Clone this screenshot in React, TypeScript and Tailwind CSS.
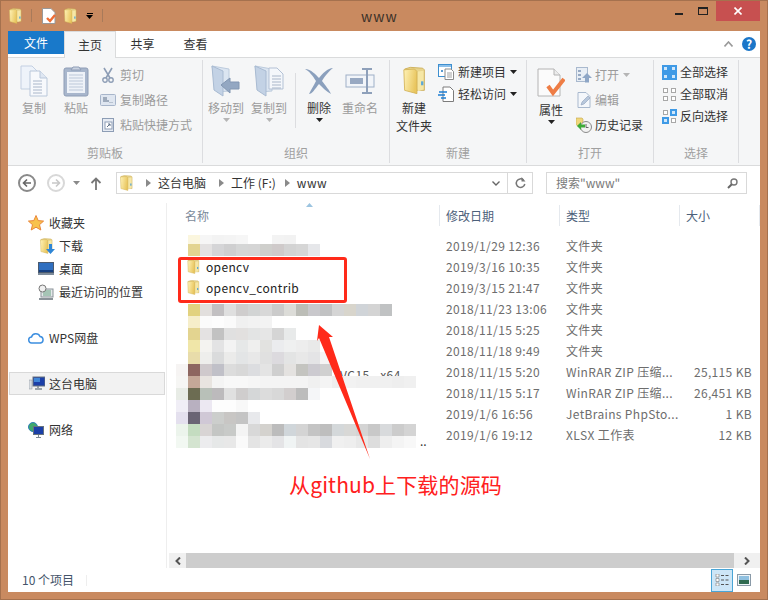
import { useId, type ReactNode } from "react";

const Folder = ({ w = 14, h = 17 }: { w?: number; h?: number }) => {
  const id = useId();
  return (
    <svg width={w} height={h} viewBox="0 0 14 17" className="shrink-0">
      <defs>
        <linearGradient id={id} x1="0" y1="0" x2="1" y2="0.3">
          <stop offset="0" stopColor="#fff3b8" />
          <stop offset="1" stopColor="#e9c65f" />
        </linearGradient>
      </defs>
      <path d="M1 1.5 L4.5 .5 L12 1 L13 2 L13 14.5 L5 14.5 Z" fill="#e8d48c" stroke="#c9a94f" strokeWidth=".5" />
      <path d="M.5 2 L7 1.5 L8.5 3 L8.5 16.5 L1 14.5 Z" fill={`url(#${id})`} stroke="#d2b052" strokeWidth=".5" />
      <path d="M9 3 L12.5 2.5 L12.5 14 L9 15 Z" fill="#f6e7a6" />
      <rect x="11" y="9" width="1.4" height="2.4" fill="#5ba7d8" />
    </svg>
  );
};

const Tri = ({ color = "#333" }: { color?: string }) => (
  <svg width="7" height="4" viewBox="0 0 7 4" className="shrink-0">
    <path d="M0 0H7L3.5 4Z" fill={color} />
  </svg>
);

const PageLines = ({ x, y }: { x: number; y: number }) => (
  <g stroke="#a9b6c9" strokeWidth="1">
    <path d={`M${x} ${y}h9M${x} ${y + 3}h9M${x} ${y + 6}h9M${x} ${y + 9}h9M${x} ${y + 12}h9`} />
  </g>
);

const CopyIcon = () => (
  <svg width="28" height="32" viewBox="0 0 28 32">
    <path d="M1 1H12L17 6V24H1Z" fill="#eef3fa" stroke="#c3d0e2" />
    <path d="M10 6H20L27 13V31H10Z" fill="#f7f9fc" stroke="#b9c7da" />
    <path d="M20 6V13H27" fill="#dfe7f2" stroke="#b9c7da" />
    <PageLines x={13} y={16} />
  </svg>
);

const PasteIcon = () => (
  <svg width="26" height="32" viewBox="0 0 26 32">
    <rect x="1" y="3" width="24" height="28" rx="2" fill="#a8b6cc" stroke="#8e9db6" />
    <rect x="4" y="7" width="18" height="21" fill="#eef2f8" />
    <path d="M6 10h14M6 13h14M6 16h14M6 19h14M6 22h14M6 25h14" stroke="#bcc8d9" />
    <path d="M8 5 L10 2H16L18 5Z" fill="#c9d2e0" stroke="#8e9db6" />
  </svg>
);

const MoveIcon = ({ copy }: { copy?: boolean }) => (
  <svg width="30" height="32" viewBox="0 0 30 32">
    <path d="M1 1L18 4V26L6 27Z" fill="#dbe5f1" stroke="#bccbdd" />
    <path d="M1 1L12 6V31L3 25Z" fill="#c3d2e5" stroke="#a9bbd2" />
    {copy ? (
      <>
        <path d="M15 3H23L29 9V24H15Z" fill="#f4f7fb" stroke="#b3c1d5" />
        <PageLines x={18} y={11} />
      </>
    ) : (
      <path d="M10 20L19 13V17H28V24H19V28Z" fill="#93a7c2" stroke="#8296b2" />
    )}
  </svg>
);

const DeleteIcon = () => (
  <svg width="30" height="28" viewBox="0 0 30 28">
    <path d="M1 2C7 2 12 8 15 11C18 7 24 1 29 1C25 4 20 10 18 14C21 18 26 24 27 27C23 25 18 20 15 17C11 22 8 27 5 27C7 23 10 18 12 14C9 9 5 4 1 2Z" fill="#8ba0bd" />
  </svg>
);

const RenameIcon = () => (
  <svg width="30" height="28" viewBox="0 0 30 28">
    <rect x="1" y="8" width="28" height="12" fill="#f2f5f9" stroke="#9fb0c8" />
    <rect x="5" y="11" width="13" height="6" fill="#98a9c2" />
    <path d="M17 2H27M17 26H27M22 2V26" stroke="#8ea0ba" strokeWidth="2" />
  </svg>
);

const NewFolderIcon = () => <Folder w={23} h={33} />;

const PropsIcon = () => (
  <svg width="28" height="30" viewBox="0 0 28 30">
    <path d="M1 1H17L23 7V28H1Z" fill="#fbfbfb" stroke="#b4b4b4" />
    <path d="M17 1V7H23" fill="#ececec" stroke="#b4b4b4" />
    <path d="M11 18L16 25L27 11" fill="none" stroke="#ee7d45" strokeWidth="4" />
  </svg>
);

const ScissorsIcon = () => (
  <svg width="12" height="16" viewBox="0 0 12 16">
    <path d="M2 1L8 11M10 1L4 11" stroke="#8d9db5" strokeWidth="1.6" />
    <circle cx="3" cy="13" r="2.2" fill="none" stroke="#8d9db5" strokeWidth="1.4" />
    <circle cx="9" cy="13" r="2.2" fill="none" stroke="#8d9db5" strokeWidth="1.4" />
  </svg>
);

const CopyPathIcon = () => (
  <svg width="16" height="12" viewBox="0 0 16 12">
    <rect x=".5" y=".5" width="15" height="11" rx="1" fill="#dfe6f0" stroke="#a7b5ca" />
    <path d="M4 3V8M6 3V8M8 6V8M10 8V8.6M12 8V8.6" stroke="#5f7088" />
  </svg>
);

const ShortcutIcon = () => (
  <svg width="12" height="15" viewBox="0 0 12 15">
    <rect x=".5" y="1.5" width="11" height="13" fill="#e6ebf3" stroke="#8d9db5" />
    <rect x="3" y="5" width="7" height="7" fill="#fff" stroke="#8d9db5" />
    <path d="M5 10L8 7M6 7H8V9" stroke="#5f7088" fill="none" />
  </svg>
);

const NewItemIcon = () => (
  <svg width="16" height="16" viewBox="0 0 16 16">
    <rect x=".5" y=".5" width="13" height="12" fill="#fff" stroke="#3d8fd0" />
    <rect x="1" y="1" width="12" height="2" fill="#8dc0ea" />
    <path d="M7 5H13L15.5 7.5V15.5H7Z" fill="#fff" stroke="#8a8a8a" />
    <path d="M9 9h5M9 11h5M9 13h5" stroke="#a0a0a0" />
    <path d="M3 6h2v2h-2z" fill="#5a9ad0" />
  </svg>
);

const EasyIcon = () => (
  <svg width="16" height="16" viewBox="0 0 16 16">
    <path d="M5 1H12L15.5 4.5V15.5H5Z" fill="#fff" stroke="#7c7c7c" />
    <path d="M1 6H9M0 9H7M3 12H8" stroke="#1e7fd4" strokeWidth="1.4" />
  </svg>
);

const OpenIcon = () => (
  <svg width="16" height="16" viewBox="0 0 16 16">
    <rect x=".5" y=".5" width="11" height="14" fill="#e8eef5" stroke="#a9b9ce" />
    <path d="M2 3h3v2H2zM2 7h3v2H2zM2 11h3v2H2z" fill="#97aac4" />
    <path d="M11 6L16 11H13V15.5H9V11H6Z" fill="#8ea6c6" />
  </svg>
);

const EditIcon = () => (
  <svg width="14" height="16" viewBox="0 0 14 16">
    <path d="M1 .5H9L13 4.5V15.5H1Z" fill="#f4f7fb" stroke="#a9b9ce" />
    <path d="M4 13L5 10L11 4L13 6L7 12Z" fill="#b8c8dc" stroke="#8ea0ba" strokeWidth=".6" />
  </svg>
);

const HistoryIcon = () => (
  <svg width="16" height="16" viewBox="0 0 16 16">
    <path d="M0 1H6L7 2V9H1.5L0 7Z" fill="#f0d77c" stroke="#c4a64c" strokeWidth=".6" />
    <circle cx="10" cy="10" r="5.5" fill="#f2f2f2" stroke="#8a8a8a" />
    <path d="M10 7V10.5H12.5" stroke="#666" fill="none" />
    <path d="M1 9L5 5V7.5H9V10.5H5V13Z" fill="#3eab38" />
  </svg>
);

const SelectIcon = ({ kind }: { kind: "all" | "none" | "invert" }) => {
  const on = "#3f9ae6";
  const cell = (x: number, y: number, filled: boolean) =>
    filled ? (
      <g key={`${x}${y}`}>
        <rect x={x} y={y} width="7" height="7" fill={on} />
        <rect x={x + 2} y={y + 2} width="3" height="3" fill="#cfe7fb" />
      </g>
    ) : (
      <rect key={`${x}${y}`} x={x + 1.5} y={y + 1.5} width="4" height="4" fill="#fff" stroke="#a8a8a8" />
    );
  const states =
    kind === "all" ? [1, 1, 1, 1] : kind === "none" ? [0, 0, 0, 0] : [0, 1, 1, 0];
  return (
    <svg width="15" height="15" viewBox="0 0 15 15">
      {kind === "all" && <rect width="15" height="15" fill={on} />}
      {cell(0, 0, !!states[0])}
      {cell(8, 0, !!states[1])}
      {cell(0, 8, !!states[2])}
      {cell(8, 8, !!states[3])}
    </svg>
  );
};

const BigButton = ({
  w,
  icon,
  label,
  disabled,
  drop,
  className = "",
}: {
  w: string;
  icon: ReactNode;
  label: ReactNode;
  disabled?: boolean;
  drop?: "dark" | "light";
  className?: string;
}) => (
  <div className={`flex flex-col items-center shrink-0 ${w} ${className} ${disabled ? "text-[#9b9b9b]" : "text-[#333]"}`}>
    <div className="h-[37px] flex items-center justify-center">{icon}</div>
    <div className="leading-[18px] text-center">{label}</div>
    {drop && (
      <div className="mt-[1px]">
        <Tri color={drop === "dark" ? "#222" : "#b5b5b5"} />
      </div>
    )}
  </div>
);

const SmallRow = ({
  icon,
  label,
  disabled,
  drop,
  gap = "gap-[4px]",
  h = "h-[25px]",
}: {
  icon: ReactNode;
  label: string;
  disabled?: boolean;
  drop?: ReactNode;
  gap?: string;
  h?: string;
}) => (
  <div className={`flex items-center ${gap} ${h} ${disabled ? "text-[#9b9b9b]" : "text-[#333]"}`}>
    <div className="w-4 flex justify-center shrink-0">{icon}</div>
    <span className="whitespace-nowrap">{label}</span>
    {drop}
  </div>
);

const Group = ({ w, label, children }: { w: string; label: string; children: ReactNode }) => (
  <div className={`${w} shrink-0 flex flex-col border-r border-[#dcdde0] my-[2px] h-[103px]`}>
    <div className="flex flex-1 pt-[2px]">{children}</div>
    <div className="text-center text-[#a0a0a0] leading-[18px] pb-[1px]">{label}</div>
  </div>
);

const Chevron = () => (
  <svg width="5" height="8" viewBox="0 0 5 8" className="shrink-0">
    <path d="M0 0L5 4L0 8Z" fill="#8a8a8a" />
  </svg>
);

const NavRow = ({
  icon,
  label,
  indent,
  selected,
  className = "",
}: {
  icon: ReactNode;
  label: string;
  indent?: boolean;
  selected?: boolean;
  className?: string;
}) => (
  <div
    className={`h-[23px] flex items-center text-[#333] ${
      selected
        ? "mx-[1px] pl-[19px] gap-[4px] border border-[#d9d9d9] bg-[#f2f2f2] w-[156px]"
        : indent
          ? "pl-[30px] gap-[5px]"
          : "pl-[20px] gap-[5px]"
    } ${className}`}
  >
    <div className="w-[16px] flex justify-center shrink-0">{icon}</div>
    <span className="whitespace-nowrap">{label}</span>
  </div>
);

const PcIcon = () => (
  <svg width="16" height="15" viewBox="0 0 16 15">
    <rect x="0" y="4" width="3" height="9" fill="#d8dde2" stroke="#8b949c" strokeWidth=".5" />
    <rect x="4" y="1" width="12" height="9" fill="#1b3fa8" stroke="#66727e" />
    <path d="M5 2h6v4H5z" fill="#3f86d8" />
    <path d="M9 10V12M6 13H13" stroke="#7d8993" strokeWidth="1.5" />
  </svg>
);

const files: { date: string; type: string; size?: string; name?: string }[] = [
  { date: "2019/1/29 12:36", type: "文件夹" },
  { date: "2019/3/16 10:35", type: "文件夹", name: "opencv" },
  { date: "2019/3/15 21:47", type: "文件夹", name: "opencv_contrib" },
  { date: "2018/11/23 13:06", type: "文件夹" },
  { date: "2018/11/15 5:25", type: "文件夹" },
  { date: "2018/11/18 9:49", type: "文件夹" },
  { date: "2018/11/15 5:20", type: "WinRAR ZIP 压缩...", size: "25,115 KB" },
  { date: "2018/11/15 5:17", type: "WinRAR ZIP 压缩...", size: "26,451 KB" },
  { date: "2019/1/6 16:56", type: "JetBrains PhpSto...", size: "1 KB" },
  { date: "2019/1/6 19:12", type: "XLSX 工作表", size: "12 KB" },
];

// blurred-out file names: one strip of 12px blocks per row
const mosaic: { top: string; left?: string; cells: string[] }[] = [
  { top: "top-[9px] h-[9px]", cells: ["#fbf6de", "#f6f6f6", "#f3f3f3", "#f4f4f4", "#f6f6f6", "#fff", "#fff", "#f3f3f3", "#f2f2f2"] },
  { top: "top-[18px]", cells: ["#e3d490", "#e4e2e2", "#d5d5d7", "#cfcfd0", "#d5d6d6", "#d5d5d5", "#cfcfcc", "#cfcaca", "#d3d3d3", "#d6d6d6", "#e6e7ea"] },
  { top: "top-[78px]", cells: ["#e2d27f", "#e2dfdd", "#c2c0c2", "#dfdfdf", "#cfcdcd", "#d2d4d4", "#d8d8d8", "#cbcbcb", "#dcdcd8", "#bcbdb7", "#c9c8cc", "#c1c2c3", "#d5d5d5", "#d8d5cc", "#d0d4d8", "#d4d4d4", "#c0c2c3"] },
  { top: "top-[90px]", cells: ["#f6eeca", "#fbfbfb", "#fdfdfd", "#fafafa", "#f0f0f0", "#f2f2f2", "#f3f3f3"] },
  { top: "top-[102px]", cells: ["#e3d490", "#e4e2e2", "#c2c2c2", "#e0e0e0", "#e2e0df", "#e3e4e4", "#e6e6e6", "#d5d5d5", "#e8eaea"] },
  { top: "top-[114px]", cells: ["#f0e6a8", "#f4f3f0", "#e3e3e4", "#f3f3f3", "#e6e8e8", "#efefee", "#e2e2e0", "#ebecee", "#eff0f0", "#ededed", "#e9e9e9"] },
  { top: "top-[126px]", cells: ["#e8dcaa", "#eeeeec", "#dadbdc", "#ebebea", "#e3e5e6", "#e8e8e8", "#e0e0e0", "#dcdade", "#e3e4e4", "#e8e8e8", "#e4e4e6", "#f5f5f5"] },
  { top: "top-[138px]", left: "#f6f4f3", cells: ["#8d6660", "#cfc9cc", "#c0c0c8", "#dcdcdc", "#d8d8d8", "#dcdde0", "#e4e4e4", "#cfcfcf", "#e4e2e0", "#c4c4c0", "#cccad0", "#d0d0d0"] },
  { top: "top-[150px]", left: "#f6f6f4", cells: ["#c4a898", "#e8e4e0", "#f4f4f4", "#f8f8f8", "#f8f8f8", "#f6f6f6", "#f4f4f4", "#f4f4f4", "#f4f4f4", "#f4f4f4", "#f0f0f0", "#f4f4f4", "#eeeeee", "#f2f2f2", "#f0f0f0", "#f0f0f0", "#f0f0f0", "#eeeeee", "#f0f0f0"] },
  { top: "top-[162px]", left: "#e8ece6", cells: ["#6c6c52", "#b8c0b8", "#bcbabc", "#e0e0e0", "#cfcdcd", "#d5d7d8", "#dcdcdc", "#d8d8d8", "#d2cece", "#bcbcbc", "#f5f6f8"] },
  { top: "top-[174px]", left: "#f0eef6", cells: ["#b8b0c0", "#ece8f2", "#fdfdfd", "#fdfdfd", "#f8f8f8"] },
  { top: "top-[186px]", left: "#e4e0ee", cells: ["#6a6474", "#d0c8d6", "#cccecc", "#c8c6c4", "#c4c4c4", "#e8e9ec"] },
  { top: "top-[198px]", left: "#ecf4ec", cells: ["#c4dcc0", "#d8d4d4", "#c4c6c4", "#c8cac8", "#f4f4f4", "#d8d8d8", "#d4d2ce", "#bcbcbc", "#d0d6da", "#d4d4d4", "#c4c4c4", "#bebebe", "#d4d8da", "#d8d8d6", "#d4d4d4", "#c8c8c8", "#d8dadc", "#cccccc", "#d4d4d4"] },
  { top: "top-[210px]", left: "#f2f8f2", cells: ["#d4e4d0", "#ececee", "#e6e8e8", "#e8e8e8", "#fafafa", "#e4e4e4", "#ebebeb", "#e4e4e6", "#f0f4f4", "#e4e4e4", "#e6e6e6", "#d8dade", "#f0f0f0", "#eeeeee", "#e8e8e8", "#dddddd", "#eeeeee", "#f4f4f4", "#f8f8f8"] },
];

export default function App() {
  return (
    <div className="w-[768px] h-[600px] bg-[#c98a60] border border-[#a5714e] relative overflow-hidden flex flex-col px-[7px] pb-[7px] text-[12px] font-['Noto_Sans_CJK_SC','Liberation_Sans',sans-serif]">
      {/* title bar */}
      <div className="h-[30px] shrink-0 flex items-start relative">
        <div className="flex items-center h-[29px] pl-[1px]">
          <Folder w={13} h={16} />
          <div className="w-[1px] h-[13px] bg-[#a87a5a] ml-[9px]" />
          <svg width="14" height="16" viewBox="0 0 14 16" className="ml-[10px]">
            <path d="M.5 .5H9L13 4.5V15.5H.5Z" fill="#fff" stroke="#999" />
            <path d="M5 10L8 13L13 7" fill="none" stroke="#ee6d35" strokeWidth="2.4" />
          </svg>
          <div className="ml-[8px]">
            <Folder w={13} h={16} />
          </div>
          <div className="ml-[9px] flex flex-col items-center gap-[1px]">
            <div className="w-[6px] h-[1px] bg-black" />
            <Tri color="#000" />
          </div>
          <div className="w-[1px] h-[13px] bg-[#a87a5a] ml-[9px]" />
        </div>
        <div className="absolute left-[353px] top-[5px] text-[14px] leading-[20px] tracking-[1px] text-[#3a3028]">www</div>
        <div className="ml-auto flex items-start">
          <div className="w-[8px] h-[2px] bg-[#222] mt-[12px] mr-[15px]" />
          <div className="w-[10px] h-[8px] border border-[#222] border-t-2 mt-[6px] mr-[8px]" />
          <div className="w-[44px] h-[20px] bg-[#c75050] flex items-center justify-center">
            <svg width="8" height="8" viewBox="0 0 8 8">
              <path d="M.5 .5L7.5 7.5M7.5 .5L.5 7.5" stroke="#fff" strokeWidth="1.6" />
            </svg>
          </div>
        </div>
      </div>

      <div className="flex-1 bg-white flex flex-col min-h-0">
        {/* tabs */}
        <div className="h-[27px] shrink-0 flex items-start relative border-b border-[#dadbdc]">
          <div className="w-[56px] h-[23px] bg-[#1979ca] text-white flex items-center justify-center">文件</div>
          <div className="w-[52px] h-[27px] bg-[#f5f6f7] border border-b-0 border-[#dadbdc] flex items-center justify-center text-[#333] relative z-10">主页</div>
          <div className="w-[53px] h-[25px] flex items-center justify-center text-[#333]">共享</div>
          <div className="w-[53px] h-[25px] flex items-center justify-center text-[#333]">查看</div>
          <div className="ml-auto flex items-center h-[25px] pr-[4px] gap-[9px]">
            <svg width="9" height="6" viewBox="0 0 9 6">
              <path d="M.5 5.5L4.5 1L8.5 5.5" fill="none" stroke="#9a9a9a" strokeWidth="1.6" />
            </svg>
            <div className="w-[14px] h-[14px] rounded-full bg-[#1b76c8] text-white text-[12px] font-bold flex items-center justify-center leading-none">?</div>
          </div>
        </div>

        {/* ribbon */}
        <div className="h-[108px] shrink-0 bg-[#f5f6f7] border-b border-[#dadbdc] flex">
          <Group w="w-[195px]" label="剪贴板">
            <BigButton w="w-[40px]" className="ml-[6px]" disabled icon={<CopyIcon />} label="复制" />
            <BigButton w="w-[40px]" className="ml-[2px]" disabled icon={<PasteIcon />} label="粘贴" />
            <div className="ml-[4px] -mt-[1px] pt-[1px]">
              <SmallRow disabled icon={<ScissorsIcon />} label="剪切" />
              <SmallRow disabled icon={<CopyPathIcon />} label="复制路径" />
              <SmallRow disabled icon={<ShortcutIcon />} label="粘贴快捷方式" />
            </div>
          </Group>
          <Group w="w-[187px]" label="组织">
            <BigButton w="w-[42px]" className="ml-[2px]" disabled drop="light" icon={<MoveIcon />} label="移动到" />
            <BigButton w="w-[42px]" className="ml-[1px]" disabled drop="light" icon={<MoveIcon copy />} label="复制到" />
            <div className="w-[1px] h-[55px] bg-[#dcdde0] ml-[5px] mt-[11px] shrink-0" />
            <BigButton w="w-[36px]" className="ml-[5px]" drop="dark" icon={<DeleteIcon />} label="删除" />
            <BigButton w="w-[40px]" className="ml-[3px]" disabled icon={<RenameIcon />} label="重命名" />
          </Group>
          <Group w="w-[137px]" label="新建">
            <BigButton w="w-[48px]" icon={<NewFolderIcon />} label={<>新建<br />文件夹</>} />
            <div className="-mt-[1px]">
              <SmallRow h="h-[22px]" icon={<NewItemIcon />} label="新建项目" drop={<span className="flex"><Tri color="#222" /></span>} />
              <SmallRow h="h-[22px]" icon={<EasyIcon />} label="轻松访问" drop={<span className="flex"><Tri color="#222" /></span>} />
            </div>
          </Group>
          <Group w="w-[127px]" label="打开">
            <BigButton w="w-[48px]" className="pt-[2px]" drop="dark" icon={<PropsIcon />} label="属性" />
            <div className="ml-[1px] -mt-[1px] pt-[1px]">
              <SmallRow gap="gap-[3px]" disabled icon={<OpenIcon />} label="打开" drop={<span className="ml-[1px] flex"><Tri color="#b5b5b5" /></span>} />
              <SmallRow gap="gap-[3px]" disabled icon={<EditIcon />} label="编辑" />
              <SmallRow gap="gap-[3px]" icon={<HistoryIcon />} label="历史记录" />
            </div>
          </Group>
          <Group w="w-[85px]" label="选择">
            <div className="ml-[7px] -mt-[1px]">
              <SmallRow gap="gap-[3px]" h="h-[22px]" icon={<SelectIcon kind="all" />} label="全部选择" />
              <SmallRow gap="gap-[3px]" h="h-[22px]" icon={<SelectIcon kind="none" />} label="全部取消" />
              <SmallRow gap="gap-[3px]" h="h-[22px]" icon={<SelectIcon kind="invert" />} label="反向选择" />
            </div>
          </Group>
        </div>

        {/* address bar */}
        <div className="h-[37px] shrink-0 flex items-start pt-[6px]">
          <div className="w-[108px] h-[22px] flex items-center shrink-0 pl-[10px]">
            <div className="w-[18px] h-[18px] rounded-full border-2 border-[#8a8a8a] flex items-center justify-center bg-white">
              <svg width="10" height="10" viewBox="0 0 10 10">
                <path d="M9 5H2M5 1.5L1.5 5L5 8.5" fill="none" stroke="#666" strokeWidth="1.6" />
              </svg>
            </div>
            <div className="w-[18px] h-[18px] rounded-full border-2 border-[#d8d8d8] flex items-center justify-center ml-[11px]">
              <svg width="10" height="10" viewBox="0 0 10 10">
                <path d="M1 5H8M5 1.5L8.5 5L5 8.5" fill="none" stroke="#c8c8c8" strokeWidth="1.6" />
              </svg>
            </div>
            <div className="ml-[8px]"><Tri color="#8a8a8a" /></div>
            <svg width="12" height="13" viewBox="0 0 12 13" className="ml-[10px]">
              <path d="M6 13V2M1.5 6L6 1.5L10.5 6" fill="none" stroke="#777" strokeWidth="1.8" />
            </svg>
          </div>
          <div className="w-[417px] h-[22px] border border-[#d9d9d9] flex items-center shrink-0 text-[#333]">
            <div className="ml-[3px]"><Folder w={13} h={16} /></div>
            <div className="ml-[13px]"><Chevron /></div>
            <span className="ml-[7px] whitespace-nowrap">这台电脑</span>
            <div className="ml-[13px]"><Chevron /></div>
            <span className="ml-[7px] whitespace-nowrap">工作 (F:)</span>
            <div className="ml-[9px]"><Chevron /></div>
            <span className="ml-[7px] tracking-[0.5px]">www</span>
            <div className="ml-auto flex items-center h-full">
              <svg width="8" height="5" viewBox="0 0 8 5" className="mr-[7px]">
                <path d="M.5 .5L4 4L7.5 .5" fill="none" stroke="#666" strokeWidth="1.4" />
              </svg>
              <div className="w-[25px] h-full border-l border-[#d9d9d9] flex items-center justify-center">
                <svg width="11" height="12" viewBox="0 0 11 12">
                  <path d="M8.5 3A4.3 4.3 0 1 0 9.8 7" fill="none" stroke="#777" strokeWidth="1.5" />
                  <path d="M6.5 0V4.5H10.5Z" fill="#777" />
                </svg>
              </div>
            </div>
          </div>
          <div className="w-[201px] h-[22px] border border-[#d9d9d9] ml-[13px] flex items-center justify-between pl-[9px] pr-[8px] text-[#7a7a7a] shrink-0">
            <span>搜索"www"</span>
            <svg width="11" height="11" viewBox="0 0 11 11">
              <circle cx="7" cy="4" r="3" fill="none" stroke="#777" strokeWidth="1.4" />
              <path d="M4.8 6.2L1 10" stroke="#666" strokeWidth="2" />
            </svg>
          </div>
        </div>

        {/* main */}
        <div className="flex-1 flex min-h-0">
          <div className="w-[159px] shrink-0 border-r border-[#eeeeee] pt-[8px]">
            <NavRow
              label="收藏夹"
              icon={
                <svg width="16" height="16" viewBox="0 0 16 16">
                  <path d="M8 .5L10.2 5.6L15.6 6.1L11.5 9.7L12.8 15L8 12.2L3.2 15L4.5 9.7L.4 6.1L5.8 5.6Z" fill="#f8c24c" stroke="#e9863a" />
                </svg>
              }
            />
            <NavRow
              indent
              label="下载"
              icon={
                <span className="relative flex">
                  <Folder w={13} h={16} />
                  <svg width="9" height="10" viewBox="0 0 9 10" className="absolute left-[6px] top-[6px]">
                    <path d="M3 0H6V5H9L4.5 10L0 5H3Z" fill="#2f86d6" />
                  </svg>
                </span>
              }
            />
            <NavRow
              indent
              label="桌面"
              icon={
                <svg width="16" height="13" viewBox="0 0 16 13">
                  <rect x=".5" y=".5" width="15" height="10" fill="#2f6fc0" stroke="#4a5a70" />
                  <rect x="1" y="8" width="14" height="2" fill="#153f80" />
                  <rect x="0" y="11" width="16" height="2" fill="#7d8b9a" />
                </svg>
              }
            />
            <NavRow
              indent
              label="最近访问的位置"
              icon={
                <svg width="16" height="16" viewBox="0 0 16 16">
                  <rect x="3" y="5" width="12" height="8" fill="#e4e8ea" stroke="#8a9298" />
                  <path d="M5 7h8M5 9h8M5 11h8" stroke="#66a080" />
                  <circle cx="4.5" cy="4.5" r="3.5" fill="#f0f0f0" stroke="#777" />
                  <path d="M1 15h14" stroke="#8a9298" strokeWidth="2" />
                </svg>
              }
            />
            <NavRow
              className="mt-[23px]"
              label="WPS网盘"
              icon={
                <svg width="16" height="12" viewBox="0 0 16 12">
                  <path d="M4 11A3 3 0 0 1 3.5 5A4.5 4.5 0 0 1 12 4.5A3.3 3.3 0 0 1 12.5 11Z" fill="#fff" stroke="#3d8fe0" strokeWidth="1.5" />
                </svg>
              }
            />
            <NavRow className="mt-[23px]" selected label="这台电脑" icon={<PcIcon />} />
            <NavRow
              className="mt-[23px]"
              label="网络"
              icon={
                <span className="relative flex w-[16px] h-[16px]">
                  <span className="absolute left-0 top-0 w-[10px] h-[10px] rounded-full bg-[#3fa86c] border border-[#2e7fb8]" />
                  <svg width="11" height="12" viewBox="0 0 11 12" className="absolute right-0 bottom-0">
                    <rect x=".5" y=".5" width="10" height="8" fill="#1b3fa8" stroke="#66727e" />
                    <path d="M5.5 9V11M3 11.5H8" stroke="#7d8993" />
                  </svg>
                </span>
              }
            />
          </div>

          <div className="flex-1 min-w-0 flex flex-col relative pl-[1px]">
            {/* column header */}
            <div className="h-[21px] mt-[2px] shrink-0 flex text-[#4c607a] relative">
              <div className="w-[272px] pl-[17px] border-r border-[#e5e9ee] flex items-center text-[#7b8a9a]">名称</div>
              <div className="w-[120px] pl-[6px] border-r border-[#e5e9ee] flex items-center">修改日期</div>
              <div className="w-[120px] pl-[6px] border-r border-[#e5e9ee] flex items-center">类型</div>
              <div className="w-[80px] pl-[6px] border-r border-[#e5e9ee] flex items-center">大小</div>
              <svg width="7" height="4" viewBox="0 0 7 4" className="absolute left-[138px] -top-[2px]">
                <path d="M0 4L3.5 0L7 4Z" fill="#9cc4e0" />
              </svg>
            </div>

            {/* file rows */}
            <div className="flex-1 pt-[9px] relative min-h-0">
              {files.map((f) => (
                <div key={f.date} className="h-[21px] flex items-center text-[#6d6d6d] tracking-[0.35px]">
                  <div className="w-[272px] pl-[19px] flex items-center gap-[6px] text-[#222]">
                    {f.name && (
                      <>
                        <Folder w={13} h={15} />
                        <span>{f.name}</span>
                      </>
                    )}
                  </div>
                  <div className="w-[120px] pl-[6px] whitespace-nowrap">{f.date}</div>
                  <div className="w-[120px] pl-[6px] whitespace-nowrap">{f.type}</div>
                  <div className="w-[72px] text-right whitespace-nowrap">{f.size}</div>
                </div>
              ))}
              <div className="absolute left-[172px] top-[142px] text-[#555] leading-[14px] tracking-[0.5px] whitespace-nowrap">VC15 _x64</div>
              {/* mosaic over the hidden file names */}
              {mosaic.map((row) => (
                <div key={row.top} className={`absolute left-[8px] flex h-[12px] ${row.top}`}>
                  <div className="w-[12px]" style={{ backgroundColor: row.left }} />
                  {row.cells.map((c, i) => (
                    <div key={i} className="w-[12px]" style={{ backgroundColor: c }} />
                  ))}
                </div>
              ))}
              <div className="absolute left-[252px] top-[209px] text-[#333] leading-none">..</div>
            </div>

            {/* horizontal scrollbar */}
            <div className="h-[15px] shrink-0 flex bg-[#f0f0f0] ml-[1px]">
              <div className="w-[17px] flex items-center justify-center">
                <svg width="6" height="8" viewBox="0 0 6 8">
                  <path d="M5 .5L1.5 4L5 7.5" fill="none" stroke="#555" strokeWidth="2" />
                </svg>
              </div>
              <div className="flex-1 bg-[#cdcdcd]" />
              <div className="w-[26px] flex items-center justify-center">
                <svg width="6" height="8" viewBox="0 0 6 8">
                  <path d="M1 .5L4.5 4L1 7.5" fill="none" stroke="#555" strokeWidth="2" />
                </svg>
              </div>
            </div>
          </div>
        </div>

        {/* status bar */}
        <div className="h-[24px] shrink-0 flex items-center text-[#44546a] relative">
          <div className="pl-[14px] w-[79px] border-r border-[#eeeeee] h-[11px] flex items-center whitespace-nowrap">10 个项目</div>
          <div className="ml-auto flex items-center pr-[9px] gap-[4px]">
            <div className="w-[22px] h-[23px] bg-[#cde6f7] border border-[#4aa5d6] flex items-center justify-center">
              <svg width="15" height="12" viewBox="0 0 15 12">
                <path d="M1 0h3v3H1zM1 4.5h3v3H1zM1 9h3v3H1z" fill="#fff" stroke="#777" strokeWidth=".6" />
                <path d="M6 1.5h3M10.5 1.5h3M6 6h3M10.5 6h3M6 10.5h3M10.5 10.5h3" stroke="#555" />
              </svg>
            </div>
            <svg width="14" height="12" viewBox="0 0 14 12">
              <rect x=".5" y=".5" width="13" height="11" fill="#eef4f8" stroke="#8a9aa8" />
              <rect x="2" y="2" width="10" height="8" fill="#8fc0e0" />
              <rect x="2" y="6" width="10" height="4" fill="#2f6a50" />
            </svg>
          </div>
        </div>
      </div>

      {/* annotations */}
      <div className="absolute left-[177px] top-[256px] w-[169px] h-[46px] border-[3px] border-[#ff2a1a] rounded-[3px]" />
      <svg width="60" height="140" viewBox="0 0 60 140" className="absolute left-[313px] top-[320px]">
        <path d="M5 4L19 16L15 16L56 138L5 17L3 20Z" fill="#ff2a1a" />
      </svg>
      <div className="absolute left-[288px] top-[468px] text-[21px] leading-[30px] tracking-[0.15px] text-[#ff2020] whitespace-nowrap">从github上下载的源码</div>
    </div>
  );
}
